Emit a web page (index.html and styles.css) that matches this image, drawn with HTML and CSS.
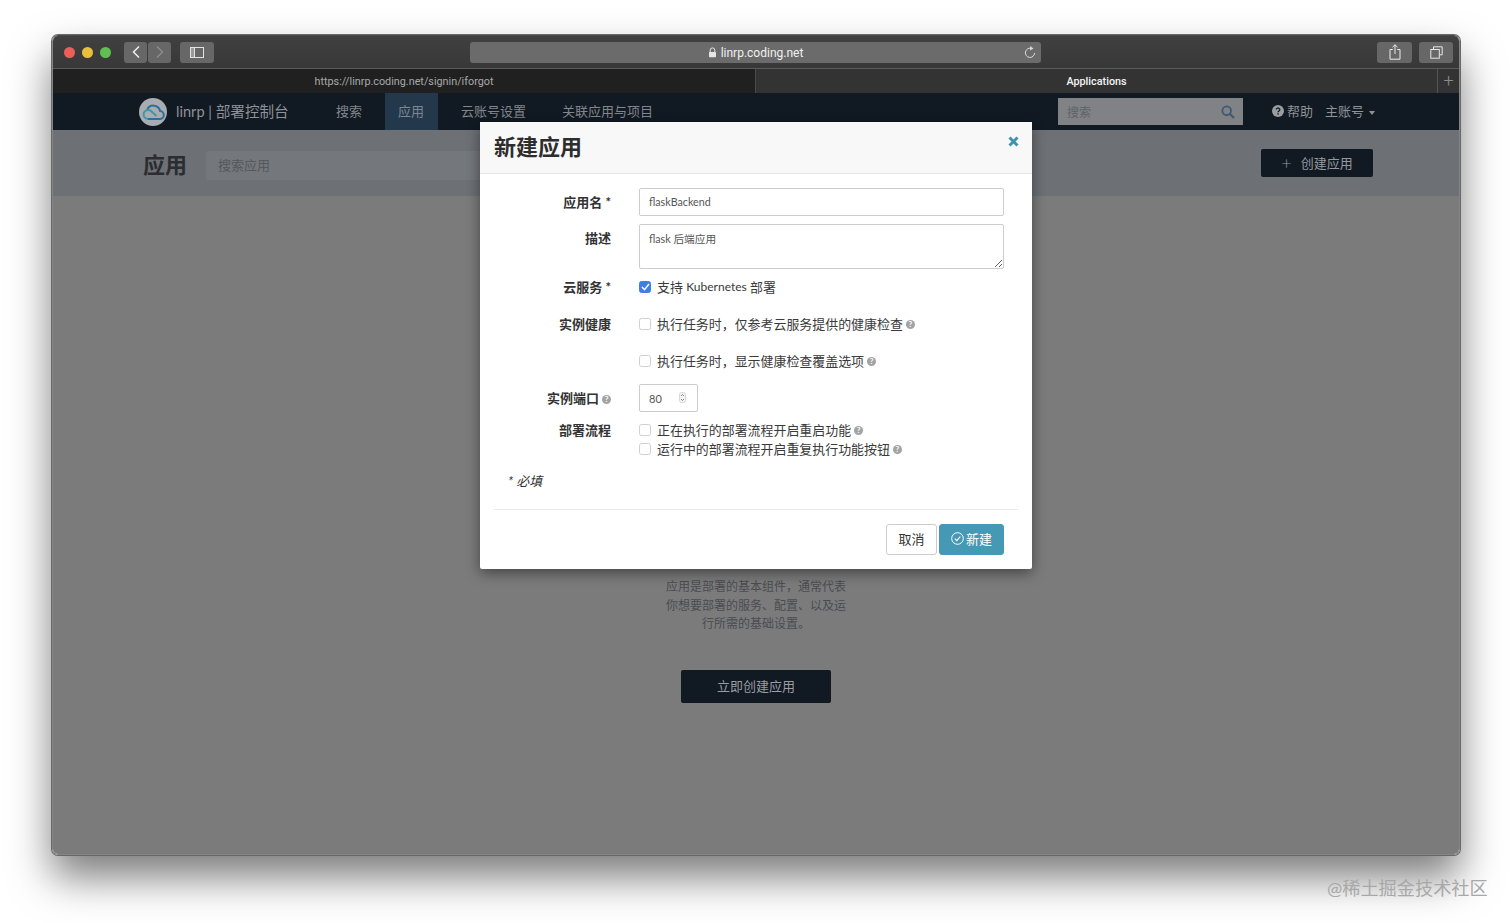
FILE: index.html
```html
<!DOCTYPE html>
<html lang="zh-CN">
<head>
    <meta charset="UTF-8">
    <meta name="viewport" content="width=device-width, initial-scale=1.0">
    <title>linrp | 部署控制台</title>
    <link rel="stylesheet" href="styles.css">
</head>
<body>
    <div class="browser">
        <div class="titlebar">
            <div class="lights">
                <span class="light light-red"></span>
                <span class="light light-yellow"></span>
                <span class="light light-green"></span>
            </div>
            <div class="history">
                <span class="chrome-btn history-btn">
                    <svg width="10" height="14" viewBox="0 0 10 14"><path d="M8 1.500 2.500 7 8 12.500" fill="none" stroke="#f0f0f0" stroke-width="1.500"/></svg>
                </span>
                <span class="chrome-btn history-btn">
                    <svg width="10" height="14" viewBox="0 0 10 14"><path d="M2 1.500 7.500 7 2 12.500" fill="none" stroke="#8e8e8e" stroke-width="1.300"/></svg>
                </span>
            </div>
            <span class="chrome-btn sidebar-btn">
                <svg width="14" height="11" viewBox="0 0 14 11"><rect x=".5" y=".5" width="13" height="10" fill="none" stroke="#e2e2e2"/><rect x="1" y="1" width="3.500" height="9" fill="#9a9a9a"/><path d="M4.500 .5v10" stroke="#e2e2e2"/></svg>
            </span>
            <div class="address">
                <svg class="lock" width="9" height="11" viewBox="0 0 9 11"><path d="M2.200 5V3.200a2.300 2.300 0 0 1 4.600 0V5" fill="none" stroke="#e6e6e6" stroke-width="1"/><rect x="1" y="5" width="7" height="5.200" rx=".8" fill="#e6e6e6"/></svg>
                <span class="address-text">linrp.coding.net</span>
                <svg class="reload" width="12" height="13" viewBox="0 0 12 13"><path d="M7.200 2.400A4.600 4.600 0 1 0 10.600 7" fill="none" stroke="#dcdcdc" stroke-width="1"/><path d="M6.200 0 9.400 2.400 6.200 4.600z" fill="#dcdcdc"/></svg>
            </div>
            <span class="chrome-btn share-btn">
                <svg width="12" height="16" viewBox="0 0 12 16"><path d="M3.800 5.500H1v9.700h10V5.500H8.200M6 10V.8M3.500 3.200 6 .8l2.500 2.400" fill="none" stroke="#ececec" stroke-width="1"/></svg>
            </span>
            <span class="chrome-btn tabs-btn">
                <svg width="13" height="13" viewBox="0 0 13 13"><path d="M3.500 3V.8h8.700v8H9.500" fill="none" stroke="#e6e6e6"/><rect x=".8" y="3.500" width="8.500" height="8.700" fill="none" stroke="#e6e6e6"/></svg>
            </span>
        </div>

        <div class="tabbar">
            <div class="tab">https://linrp.coding.net/signin/iforgot</div>
            <div class="tab tab-active">Applications</div>
            <div class="tab-add">+</div>
        </div>

        <div class="app">
            <nav class="navbar">
                <svg class="logo" width="28" height="28" viewBox="0 0 28 28">
                    <circle cx="14" cy="14" r="14" fill="#a9acb0"/>
                    <path d="M9 21h11.500a4 4 0 0 0 .6-8 6.800 6.800 0 0 0-13-1" fill="none" stroke="#2f6f9c" stroke-width="2"/>
                    <path d="M9 21a4.500 4.500 0 1 1 3-7.900l5.500 5" fill="none" stroke="#3c9aa5" stroke-width="2"/>
                </svg>
                <span class="brand">linrp | 部署控制台</span>
                <ul class="nav-list">
                    <li class="nav-item">搜索</li>
                    <li class="nav-item active">应用</li>
                    <li class="nav-item">云账号设置</li>
                    <li class="nav-item">关联应用与项目</li>
                </ul>
                <div class="nav-search">
                    <span>搜索</span>
                    <svg width="14" height="14" viewBox="0 0 14 14"><circle cx="5.700" cy="5.700" r="4.300" fill="none" stroke="#3c5a76" stroke-width="1.800"/><path d="m9 9 4 4" stroke="#3c5a76" stroke-width="2.200"/></svg>
                </div>
                <div class="nav-help">
                    <svg width="12" height="12" viewBox="0 0 12 12"><circle cx="6" cy="6" r="6" fill="#9a9da1"/><path d="M4.200 4.600a1.800 1.600 0 1 1 2.700 1.400c-.6.400-.9.600-.9 1.300" fill="none" stroke="#111923" stroke-width="1.300"/><rect x="5.300" y="8.200" width="1.400" height="1.400" fill="#111923"/></svg>
                    <span>帮助</span>
                </div>
                <div class="nav-account">主账号<span class="caret"></span></div>
            </nav>

            <div class="subheader">
                <h1>应用</h1>
                <div class="sub-search">搜索应用</div>
                <div class="create-btn"><span class="plus">+</span>创建应用</div>
            </div>

            <main class="empty">
                <p>应用是部署的基本组件，通常代表你想要部署的服务、配置、以及运行所需的基础设置。</p>
                <div class="empty-btn">立即创建应用</div>
            </main>

            <div class="modal">
                <div class="modal-header">
                    <h2>新建应用</h2>
                    <svg class="modal-close" width="11" height="11" viewBox="0 0 11 11"><path d="m1.500 1.500 8 8m0-8-8 8" stroke="#3f94ac" stroke-width="3"/></svg>
                </div>
                <form class="modal-body">
                    <div class="form-group form-group-first">
                        <label class="form-label">应用名 *</label>
                        <input class="form-input" type="text" value="flaskBackend">
                    </div>
                    <div class="form-group">
                        <label class="form-label">描述</label>
                        <textarea class="form-input form-textarea">flask 后端应用</textarea>
                    </div>
                    <div class="form-group form-group-check">
                        <label class="form-label label-check">云服务 *</label>
                        <label class="check"><span class="box box-on"><svg width="9" height="8" viewBox="0 0 9 8"><path d="m1 4 2.500 2.700L8 1" fill="none" stroke="#fff" stroke-width="1.500"/></svg></span>支持&nbsp;<span class="latin">Kubernetes</span>&nbsp;部署</label>
                    </div>
                    <div class="form-group form-group-check">
                        <label class="form-label label-check">实例健康</label>
                        <label class="check"><span class="box"></span>执行任务时，仅参考云服务提供的健康检查<span class="tip">?</span></label>
                    </div>
                    <div class="form-group form-group-tight">
                        <label class="form-label label-check"></label>
                        <label class="check"><span class="box"></span>执行任务时，显示健康检查覆盖选项<span class="tip">?</span></label>
                    </div>
                    <div class="form-group">
                        <label class="form-label">实例端口<span class="tip tip-label">?</span></label>
                        <div class="number-input">
                            <span>80</span>
                            <span class="spinner">
                                <svg width="7" height="11" viewBox="0 0 7 11"><rect x=".5" y=".5" width="6" height="10" rx="2" fill="#f4f4f4" stroke="#d8d8d8"/><path d="m2 4 1.500-1.500L5 4M2 7l1.500 1.500L5 7" fill="none" stroke="#666" stroke-width=".8"/></svg>
                            </span>
                        </div>
                    </div>
                    <div class="form-group form-group-stack">
                        <label class="form-label label-check">部署流程</label>
                        <div class="check-stack">
                            <label class="check"><span class="box"></span>正在执行的部署流程开启重启功能<span class="tip">?</span></label>
                            <label class="check"><span class="box"></span>运行中的部署流程开启重复执行功能按钮<span class="tip">?</span></label>
                        </div>
                    </div>
                    <p class="required-note">* 必填</p>
                    <div class="modal-footer">
                        <button type="button" class="btn btn-cancel">取消</button>
                        <button type="button" class="btn btn-primary">
                            <svg width="13" height="13" viewBox="0 0 13 13"><circle cx="6.500" cy="6.500" r="5.800" fill="none" stroke="#fff" stroke-width="1"/><path d="m3.800 6.600 2 2 3.500-3.900" fill="none" stroke="#fff" stroke-width="1.100"/></svg>
                            新建
                        </button>
                    </div>
                </form>
            </div>
        </div>
    </div>

    <div class="watermark">@稀土掘金技术社区</div>
</body>
</html>
```

FILE: styles.css
```css
html {
    height: 100%;
}

body {
    margin: 0;
    height: 923px;
    padding: 35px 52px 0;
    box-sizing: border-box;
    overflow: hidden;
    background-color: #fff;
    font-family: Lato, "Noto Sans CJK SC", sans-serif;
    font-size: 13px;
    color: #333;
}

.browser {
    width: 1408px;
    height: 820px;
    box-sizing: border-box;
    display: flex;
    flex-direction: column;
    border: 1px solid #858585;
    border-top-color: #4a4a4a;
    border-radius: 6px;
    overflow: hidden;
    box-shadow: 0 0 0 1px #686868, 0 22px 42px rgba(0, 0, 0, 0.52);
}

/* browser chrome */
.titlebar {
    height: 32px;
    flex: none;
    display: flex;
    align-items: center;
    background: linear-gradient(#404040, #383838);
    border-bottom: 1px solid #5a5a5a;
}

.lights {
    display: flex;
    gap: 7px;
    margin-left: 11px;
}

.light {
    width: 11px;
    height: 11px;
    border-radius: 50%;
}

.light-red { background-color: #ec5f59; }
.light-yellow { background-color: #e9bf3e; }
.light-green { background-color: #60c04f; }

.chrome-btn {
    height: 21px;
    display: flex;
    align-items: center;
    justify-content: center;
    background-color: #676767;
    border-radius: 3px;
}

.history {
    display: flex;
    gap: 1px;
    margin-left: 13px;
}

.history-btn {
    width: 23px;
}

.sidebar-btn {
    width: 34px;
    margin-left: 9px;
}

.address {
    width: 571px;
    height: 21px;
    margin-left: 256px;
    position: relative;
    display: flex;
    align-items: center;
    justify-content: center;
    gap: 4px;
    background-color: #6b6b6b;
    border-radius: 3px;
    font-family: Roboto, sans-serif;
    font-size: 12px;
    color: #f0f0f0;
}

.address-text {
    padding-top: 2px;
}

.reload {
    position: absolute;
    right: 5px;
    top: 4px;
}

.share-btn {
    width: 35px;
    margin-left: auto;
}

.tabs-btn {
    width: 34px;
    margin-left: 7px;
    margin-right: 6px;
}

.tabbar {
    height: 24px;
    flex: none;
    display: flex;
    font-family: Roboto, sans-serif;
    font-size: 10.800px;
    line-height: 26px;
    background-color: #202020;
}

.tab {
    width: 702px;
    text-align: center;
    color: #a9a9a9;
}

.tab-active {
    width: 682px;
    background-color: #333;
    color: #f5f5f5;
    font-weight: 500;
    border-left: 1px solid #4a4a4a;
    box-sizing: border-box;
}

.tab-add {
    flex: 1;
    text-align: center;
    color: #8c8c8c;
    font-size: 18px;
    font-weight: 300;
    line-height: 24px;
    background-color: #333;
    border-left: 1px solid #555;
}

/* page */
.app {
    flex: 1;
    position: relative;
    display: flex;
    flex-direction: column;
    background-color: #7b7b7b;
}

.navbar {
    height: 37px;
    flex: none;
    display: flex;
    align-items: center;
    padding-left: 86px;
    background-color: #111923;
    color: #8f9296;
}

.logo {
    flex: none;
}

.brand {
    width: 147px;
    margin-left: 9px;
    padding-bottom: 2px;
    font-size: 14.600px;
    white-space: nowrap;
}

.nav-list {
    display: flex;
    align-self: stretch;
    gap: 10px;
    margin: 0;
    padding: 0;
    list-style: none;
}

.nav-item {
    display: flex;
    align-items: center;
    padding: 0 13px 3px;
    color: #83868a;
}

.nav-item.active {
    width: 27px;
    background-color: #24384c;
    color: #7b8792;
}

.nav-search {
    width: 185px;
    height: 27px;
    margin-left: 392px;
    box-sizing: border-box;
    display: flex;
    align-items: center;
    justify-content: space-between;
    padding: 0 8px 0 9px;
    background-color: #808285;
    font-size: 12px;
    color: #5f6266;
}

.nav-help {
    display: flex;
    align-items: center;
    gap: 3px;
    margin-left: 29px;
    padding-bottom: 2px;
}

.nav-account {
    display: flex;
    align-items: center;
    margin-left: 12px;
    padding-bottom: 2px;
}

.caret {
    margin-left: 5px;
    margin-top: 4px;
    border-top: 4px solid #8f9296;
    border-left: 3.500px solid transparent;
    border-right: 3.500px solid transparent;
}

.subheader {
    height: 66px;
    flex: none;
    display: flex;
    align-items: center;
    padding: 0 86px 0 90px;
    background-color: #6d7075;
}

.subheader h1 {
    margin: 0;
    font-size: 22px;
    color: #2b2d31;
}

.sub-search {
    width: 262px;
    height: 29px;
    margin: 5px 0 0 19px;
    padding-left: 12px;
    line-height: 29px;
    background-color: #74777c;
    border-radius: 2px;
    color: #55585c;
}

.create-btn {
    width: 112px;
    height: 28px;
    margin-left: auto;
    margin-top: -1px;
    display: flex;
    align-items: center;
    justify-content: center;
    gap: 9px;
    padding-bottom: 1px;
    box-sizing: border-box;
    background-color: #111923;
    border-radius: 2px;
    color: #95989c;
}

.plus {
    font-size: 18px;
    font-weight: 300;
    line-height: 1;
}

.empty {
    flex: 1;
    display: flex;
    flex-direction: column;
    align-items: center;
    padding-top: 382px;
}

.empty p {
    width: 182px;
    margin: 0 0 36px;
    text-align: center;
    font-size: 12px;
    line-height: 18.500px;
    color: #4a4c50;
}

.empty-btn {
    width: 150px;
    height: 33px;
    line-height: 33px;
    text-align: center;
    background-color: #111923;
    border-radius: 2px;
    color: #9a9da1;
}

/* modal */
.modal {
    position: absolute;
    top: 29px;
    left: 427px;
    width: 552px;
    height: 447px;
    background-color: #fff;
    border-radius: 2px;
    box-shadow: 0 4px 14px rgba(0, 0, 0, 0.45);
}

.modal-header {
    height: 51px;
    position: relative;
    padding-left: 14px;
    background-color: #f8f8f8;
    border-bottom: 1px solid #e5e5e5;
}

.modal-header h2 {
    margin: 0;
    font-size: 22px;
    line-height: 49px;
    color: #2d2d2d;
}

.modal-close {
    position: absolute;
    top: 14px;
    right: 13px;
}

.modal-body {
    padding: 14px 28px 0 14px;
}

.form-group {
    display: flex;
    gap: 28px;
    margin-bottom: 9px;
}

.form-group-first {
    margin-bottom: 8px;
}

.form-group-check {
    margin-bottom: 19px;
    height: 18px;
}

.form-group-tight {
    margin-bottom: 14px;
    height: 18px;
}

.form-group-stack {
    margin-bottom: 14px;
}

.form-label {
    width: 117px;
    flex: none;
    padding-top: 5px;
    text-align: right;
    font-weight: 700;
    line-height: 18px;
    color: #333;
}

.label-check {
    padding-top: 0;
}

.form-input {
    width: 365px;
    height: 28px;
    box-sizing: border-box;
    padding: 0 9px 2px;
    border: 1px solid #ccc;
    border-radius: 2px;
    font-family: Lato, "Noto Sans CJK SC", sans-serif;
    font-size: 10.700px;
    color: #555;
    background-color: #fff;
}

.form-textarea {
    display: block;
    height: 45px;
    padding-top: 6px;
    line-height: 16px;
}

.check {
    display: flex;
    align-items: center;
    height: 18px;
    line-height: 18px;
    font-size: 12.950px;
    color: #3a3a3a;
    white-space: nowrap;
}

.latin {
    font-size: 12px;
}

.check-stack {
    display: flex;
    flex-direction: column;
    gap: 1px;
}

.box {
    width: 10px;
    height: 10px;
    flex: none;
    display: flex;
    align-items: center;
    justify-content: center;
    margin-right: 6px;
    border: 1px solid #d0d0d0;
    border-radius: 2.500px;
    background-color: #fff;
}

.box-on {
    background-color: #3f7fe4;
    border-color: #3f7fe4;
}

.tip {
    width: 9px;
    height: 9px;
    display: inline-block;
    margin-left: 3px;
    border-radius: 50%;
    background-color: #a3a3a3;
    color: #fff;
    font-size: 8px;
    font-weight: 700;
    line-height: 9px;
    text-align: center;
}

.tip-label {
    vertical-align: 1px;
}

.number-input {
    width: 59px;
    height: 28px;
    box-sizing: border-box;
    display: flex;
    align-items: center;
    justify-content: space-between;
    padding: 0 11px 0 9px;
    border: 1px solid #ccc;
    border-radius: 2px;
    font-size: 11px;
    color: #555;
}

.spinner {
    display: flex;
    margin-top: -2px;
}

.required-note {
    margin: 0 0 19px 14px;
    font-style: italic;
    line-height: 18px;
    color: #333;
}

.modal-footer {
    display: flex;
    justify-content: flex-end;
    gap: 2px;
    margin-right: -14px;
    padding: 14px 14px 0 0;
    border-top: 1px solid #e8e8e8;
}

.btn {
    height: 31px;
    display: flex;
    align-items: center;
    justify-content: center;
    gap: 2px;
    padding: 0 0 2px;
    border-radius: 3px;
    font-family: inherit;
    font-size: 13px;
}

.btn-cancel {
    width: 51px;
    background-color: #fff;
    border: 1px solid #ccc;
    color: #333;
}

.btn-primary {
    width: 65px;
    background-color: #4699b4;
    border: 1px solid #4699b4;
    color: #fff;
}

.watermark {
    position: absolute;
    top: 875px;
    left: 1327px;
    font-size: 18.200px;
    line-height: 27px;
    color: #a8a8a8;
    white-space: nowrap;
}
```
